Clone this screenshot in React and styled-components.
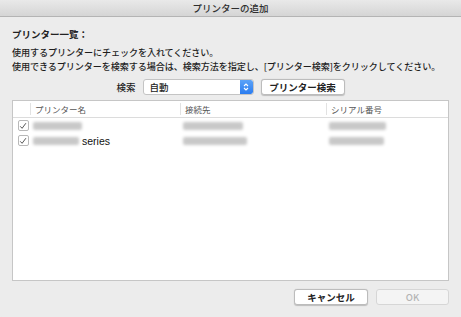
import React from 'react';
import styled, { createGlobalStyle } from 'styled-components';

const GlobalStyle = createGlobalStyle`
  body {
    margin: 0;
    background: #ececec;
    font-family: "Noto Sans CJK JP", "Liberation Sans", sans-serif;
  }
`;

const printers = [
  { id: 1, nameW: 49, addr: 60, serial: 57, series: false },
  { id: 2, nameW: 46, addr: 64, serial: 55, series: true },
];

function Check() {
  return (
    <CheckBox>
      <svg width="8" height="8" viewBox="0 0 8 8">
        <path d="M1.2 4.3 L3.1 6.3 L6.9 1.2" fill="none" stroke="#444" strokeWidth="0.9" />
      </svg>
    </CheckBox>
  );
}

function Stepper() {
  return (
    <StepBox>
      <svg width="6" height="10" viewBox="0 0 6 10">
        <path d="M1 4 L3 2 L5 4 M1 6 L3 8 L5 6" fill="none" stroke="#fff" strokeWidth="1.1" />
      </svg>
    </StepBox>
  );
}

function App() {
  return (
    <Window>
      <GlobalStyle />
      <TitleBar>プリンターの追加</TitleBar>
      <Body>
        <Heading>プリンター一覧：</Heading>
        <Text>
          使用するプリンターにチェックを入れてください。
          <br />
          使用できるプリンターを検索する場合は、検索方法を指定し、[プリンター検索]をクリックしてください。
        </Text>
        <SearchRow>
          <Label>検索</Label>
          <Select>
            <span>自動</span>
            <Stepper />
          </Select>
          <Button $w={84} $bold>プリンター検索</Button>
        </SearchRow>
        <Table>
          <HeaderRow>
            <HeadCell />
            <HeadCell $sep>プリンター名</HeadCell>
            <HeadCell $sep>接続先</HeadCell>
            <HeadCell $sep>シリアル番号</HeadCell>
          </HeaderRow>
          {printers.map((p) => (
            <Row key={p.id}>
              <Cell $center>
                <Check />
              </Cell>
              <Cell>
                <Blur $w={p.nameW} />
                {p.series && <Series>series</Series>}
              </Cell>
              <Cell>
                <Blur $w={p.addr} />
              </Cell>
              <Cell>
                <Blur $w={p.serial} />
              </Cell>
            </Row>
          ))}
        </Table>
        <Footer>
          <Button $w={74} $bold>キャンセル</Button>
          <Button $w={73} disabled>OK</Button>
        </Footer>
      </Body>
    </Window>
  );
}

export default App;

const Window = styled.div`
  width: 461px;
  height: 317px;
  background: #ececec;
  display: flex;
  flex-direction: column;
  overflow: hidden;
  border-radius: 0 0 4px 4px;
`;

const TitleBar = styled.div`
  height: 16px;
  line-height: 16px;
  text-align: center;
  font-size: 9.5px;
  font-weight: 500;
  color: #2e2e2e;
  background: linear-gradient(#e9e9e9, #d5d5d5);
  border-bottom: 1px solid #b4b4b4;
`;

const Body = styled.div`
  padding: 10px 12px 0 12px;
  display: flex;
  flex-direction: column;
`;

const Heading = styled.div`
  font-size: 9.5px;
  line-height: 14px;
  font-weight: bold;
  color: #222;
`;

const Text = styled.div`
  margin-top: 4px;
  font-size: 9.1px;
  font-weight: 500;
  line-height: 14px;
  color: #1e1e1e;
  white-space: nowrap;
  letter-spacing: -0.1px;
`;

const SearchRow = styled.div`
  margin-top: 6px;
  height: 16px;
  display: flex;
  justify-content: center;
  align-items: center;
  gap: 7px;
`;

const Label = styled.span`
  font-size: 9.5px;
  font-weight: 500;
  color: #222;
`;

const Select = styled.div`
  width: 111px;
  height: 16px;
  box-sizing: border-box;
  border: 1px solid #c4c4c4;
  border-radius: 3px;
  background: #fff;
  display: flex;
  align-items: center;
  justify-content: space-between;
  font-size: 9.5px;
  font-weight: 500;
  color: #222;
  padding-left: 6px;
  overflow: hidden;
`;

const StepBox = styled.div`
  width: 13px;
  height: 14px;
  background: linear-gradient(#5ca3f8, #2a7cf0);
  border-radius: 0 2px 2px 0;
  display: flex;
  align-items: center;
  justify-content: center;
`;

const Button = styled.button`
  width: ${(p) => p.$w}px;
  height: 16px;
  padding: 0;
  box-sizing: border-box;
  border: 1px solid ${(p) => (p.disabled ? '#d6d6d6' : '#bcbcbc')};
  border-radius: 3px;
  background: ${(p) => (p.disabled ? '#f4f4f4' : '#fff')};
  box-shadow: ${(p) => (p.disabled ? 'none' : '0 0.5px 1px rgba(0,0,0,0.2)')};
  font-family: "Noto Sans CJK JP", "Liberation Sans", sans-serif;
  font-size: 9.5px;
  font-weight: ${(p) => (p.$bold ? 'bold' : '500')};
  color: ${(p) => (p.disabled ? '#b4b4b4' : '#222')};
  line-height: 14px;
`;

const Table = styled.div`
  margin-top: 5px;
  height: 181px;
  box-sizing: border-box;
  background: #fff;
  border: 1px solid #c6c6c6;
`;

const cols = '17px 150px 146px 1fr';

const HeaderRow = styled.div`
  display: grid;
  grid-template-columns: ${cols};
  height: 16px;
  border-bottom: 1px solid #dcdcdc;
`;

const HeadCell = styled.div`
  display: flex;
  align-items: center;
  padding-left: 4px;
  margin: 2px 0;
  font-size: 8.5px;
  color: #555;
  border-left: ${(p) => (p.$sep ? '1px solid #e2e2e2' : 'none')};
`;

const Row = styled.div`
  display: grid;
  grid-template-columns: ${cols};
  height: 15px;
`;

const Cell = styled.div`
  display: flex;
  align-items: center;
  justify-content: ${(p) => (p.$center ? 'center' : 'flex-start')};
  padding-left: ${(p) => (p.$center ? '0' : '3px')};
`;

const CheckBox = styled.div`
  width: 9px;
  height: 9px;
  margin-left: 3px;
  border: 1px solid #b8b8b8;
  border-radius: 2px;
  background: #fff;
  display: flex;
  align-items: center;
  justify-content: center;
`;

const Blur = styled.span`
  display: inline-block;
  width: ${(p) => p.$w}px;
  height: 8px;
  background: #c8c8c8;
  border-radius: 2px;
  filter: blur(1.5px);
`;

const Series = styled.span`
  margin-left: 3px;
  font-family: "Liberation Sans", sans-serif;
  font-size: 10.5px;
  color: #111;
`;

const Footer = styled.div`
  margin-top: 8px;
  display: flex;
  justify-content: flex-end;
  gap: 8px;
`;
